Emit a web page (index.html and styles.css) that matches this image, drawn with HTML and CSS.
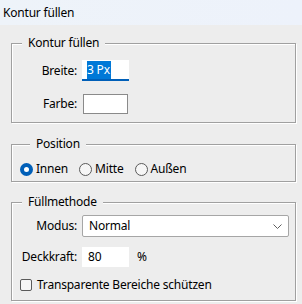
FILE: index.html
```html
<!DOCTYPE html>
<html>
<head>
<meta charset="utf-8">
<title>Kontur füllen</title>
<link rel="stylesheet" href="styles.css">
</head>
<body>

<div class="titlebar">Kontur füllen</div>

<div class="dialog">

<fieldset class="group group-stroke">
    <legend>Kontur füllen</legend>
    <div class="form">
        <label class="label">Breite:</label>
        <div class="field field-focus"><span class="selection">3 Px</span></div>
        <label class="label label-color">Farbe:</label>
        <div class="swatch"></div>
    </div>
</fieldset>

<fieldset class="group group-position">
    <legend>Position</legend>
    <div class="radios">
        <label class="radio"><span class="dot dot-checked"></span>Innen</label>
        <label class="radio"><span class="dot"></span>Mitte</label>
        <label class="radio"><span class="dot"></span>Außen</label>
    </div>
</fieldset>

<fieldset class="group group-fill">
    <legend>Füllmethode</legend>
    <div class="form form-fill">
        <label class="label">Modus:</label>
        <div class="select">
            <span>Normal</span>
            <svg class="chevron" width="9" height="5" viewBox="0 0 9 5"><polyline points="0.5,0.5 4.5,4.5 8.5,0.5" fill="none" stroke="#5f5f5f" stroke-width="1"/></svg>
        </div>
        <label class="label">Deckkraft:</label>
        <div class="opacity">
            <div class="field field-plain">80</div>
            <span class="unit">%</span>
        </div>
    </div>
    <label class="check"><span class="box"></span>Transparente Bereiche schützen</label>
</fieldset>

</div>

</body>
</html>
```

FILE: styles.css
```css
BODY {
    margin: 0;
    background-color: #ededed;
    font-family: "Noto Sans", "Open Sans", sans-serif;
    font-size: 12px;
    line-height: 16px;
    letter-spacing: -0.2px;
    color: #000;
}

.titlebar {
    height: 25px;
    line-height: 25px;
    padding-left: 3px;
    background: linear-gradient(to right, #eef3f9, #edf2fb);
}

.dialog {
    padding: 10px 6px 0 11px;
}

/* etched group boxes */
.group {
    margin: 0 0 13px 0;
    padding: 0;
    border: 1px solid #a0a0a0;
    box-shadow: inset 1px 1px 0 #fff, 1px 1px 0 #fff;
    min-width: 0;
}
.group LEGEND {
    margin-left: 10px;
    padding: 0 6px;
    background-color: #ededed;
    line-height: 16px;
}

.group-stroke {
    padding: 9px 0 8px 0;
}
.group-position {
    margin-bottom: 12px;
    padding: 9px 0 4px 8px;
}
.group-fill {
    padding: 5px 6px 7px 0;
}

.form {
    display: grid;
    grid-template-columns: 65px auto;
    column-gap: 5px;
    row-gap: 13px;
    align-items: center;
    justify-items: start;
}
.form-fill {
    grid-template-columns: 65px 1fr;
    row-gap: 10px;
}
.label {
    justify-self: end;
}

.field {
    box-sizing: border-box;
    width: 47px;
    height: 21px;
    background-color: #fff;
    padding: 2px 0 0 5px;
}
.field-focus {
    border-bottom: 2px solid #005fb8;
}
.field-plain {
    height: 20px;
    padding-left: 6px;
}
.selection {
    background-color: #0078d7;
    color: #fff;
    padding: 0 1px 1px 0;
}

.swatch {
    box-sizing: border-box;
    width: 45px;
    height: 20px;
    margin-left: 1px;
    background-color: #fff;
    border: 1px solid #8a8a8a;
}

.radios {
    display: flex;
    gap: 11px;
}
.radio {
    display: flex;
    align-items: center;
    gap: 3px;
}
.dot {
    box-sizing: border-box;
    width: 13px;
    height: 13px;
    border: 1px solid #5a5a5a;
    border-radius: 50%;
    background-color: #f6f6f6;
}
.dot-checked {
    border: 4px solid #005fb8;
    background-color: #fff;
}

.select {
    box-sizing: border-box;
    justify-self: stretch;
    height: 22px;
    display: flex;
    align-items: center;
    justify-content: space-between;
    padding: 0 6px 0 6px;
    background-color: #fff;
    border: 1px solid #a6a6a6;
    border-radius: 2px;
}

.opacity {
    display: flex;
    align-items: center;
    gap: 8px;
}

.check {
    display: flex;
    align-items: center;
    gap: 5px;
    margin: 10px 0 0 8px;
}
.box {
    box-sizing: border-box;
    width: 12px;
    height: 12px;
    border: 1px solid #5a5a5a;
    border-radius: 2px;
    background-color: #f6f6f6;
}
```
